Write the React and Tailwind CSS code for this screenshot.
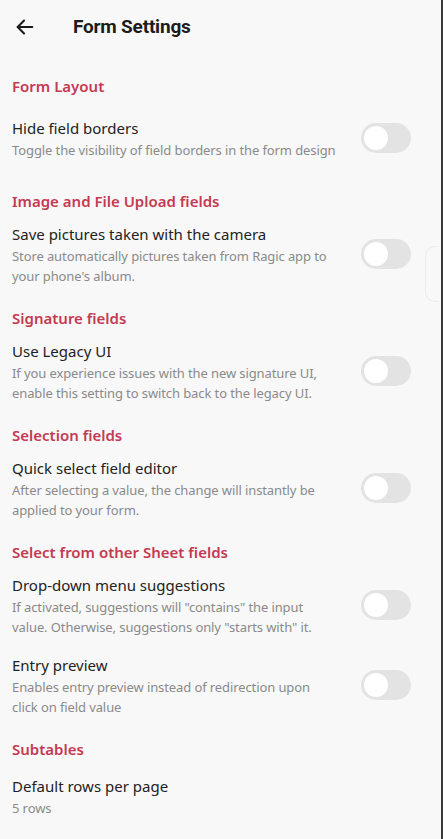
import React, { useState } from "react";

const sections = [
  {
    title: "Form Layout",
    items: [
      {
        label: "Hide field borders",
        desc: ["Toggle the visibility of field borders in the form design"],
        toggle: true,
      },
    ],
  },
  {
    title: "Image and File Upload fields",
    items: [
      {
        label: "Save pictures taken with the camera",
        desc: ["Store automatically pictures taken from Ragic app to", "your phone's album."],
        toggle: true,
      },
    ],
  },
  {
    title: "Signature fields",
    items: [
      {
        label: "Use Legacy UI",
        desc: ["If you experience issues with the new signature UI,", "enable this setting to switch back to the legacy UI."],
        toggle: true,
      },
    ],
  },
  {
    title: "Selection fields",
    items: [
      {
        label: "Quick select field editor",
        desc: ["After selecting a value, the change will instantly be", "applied to your form."],
        toggle: true,
      },
    ],
  },
  {
    title: "Select from other Sheet fields",
    items: [
      {
        label: "Drop-down menu suggestions",
        desc: ["If activated, suggestions will \"contains\" the input", "value. Otherwise, suggestions only \"starts with\" it."],
        toggle: true,
      },
      {
        label: "Entry preview",
        desc: ["Enables entry preview instead of redirection upon", "click on field value"],
        toggle: true,
      },
    ],
  },
  {
    title: "Subtables",
    items: [
      {
        label: "Default rows per page",
        desc: ["5 rows"],
        toggle: false,
      },
    ],
  },
];

function Toggle() {
  const [on, setOn] = useState(false);
  return (
    <button
      onClick={() => setOn(!on)}
      className={`w-[50px] h-[30px] rounded-full p-[3px] flex items-center shrink-0 ${on ? "bg-[#c43a52] justify-end" : "bg-[#e3e3e3] justify-start"}`}
    >
      <span className="w-[24px] h-[24px] rounded-full bg-white block" />
    </button>
  );
}

function App() {
  return (
    <div className="relative w-[443px] h-[839px] bg-[#f8f8f8] overflow-hidden border-r-2 border-[#3a3a3a]" style={{ fontFamily: '"Noto Sans", sans-serif' }}>
      {/* HEADER */}
      <div className="flex items-center h-[54px] pl-[14px]">
        <svg width="22" height="22" viewBox="0 0 24 24" fill="none" stroke="#1a1a1a" strokeWidth="2.2" strokeLinecap="round" strokeLinejoin="round">
          <path d="M20 12H4" />
          <path d="M11 5l-7 7 7 7" />
        </svg>
        <h1 className="ml-[37px] text-[19px] font-bold text-[#1c1c1c] tracking-[-0.2px]" style={{ fontFamily: "Roboto, sans-serif" }}>
          Form Settings
        </h1>
      </div>

      {/* faint side handle */}
      <div className="absolute right-[2px] top-[246px] w-[14px] h-[56px] border border-r-0 border-[#ececec] rounded-l-[10px]" />

      <div className="pt-[8px] pl-[12px] pr-[30px]">
        {sections.map((s) => (
          <div key={s.title}>
            <h2 className="mt-[11px] text-[15px] font-semibold text-[#c43a52] leading-[26px]">{s.title}</h2>
            {s.items.map((it) => (
              <div
                key={it.label}
                className={`flex items-center justify-between py-[8px] ${it.toggle ? "min-h-[78px]" : "min-h-[68px]"}`}
              >
                <div>
                  <div className="text-[15px] text-[#222] leading-[24px]">{it.label}</div>
                  {it.desc.map((d) => (
                    <div key={d} className="text-[13px] text-[#8a8a8a] leading-[20px] tracking-[-0.1px]">{d}</div>
                  ))}
                </div>
                {it.toggle && <Toggle />}
              </div>
            ))}
          </div>
        ))}
      </div>
    </div>
  );
}

export default App;
